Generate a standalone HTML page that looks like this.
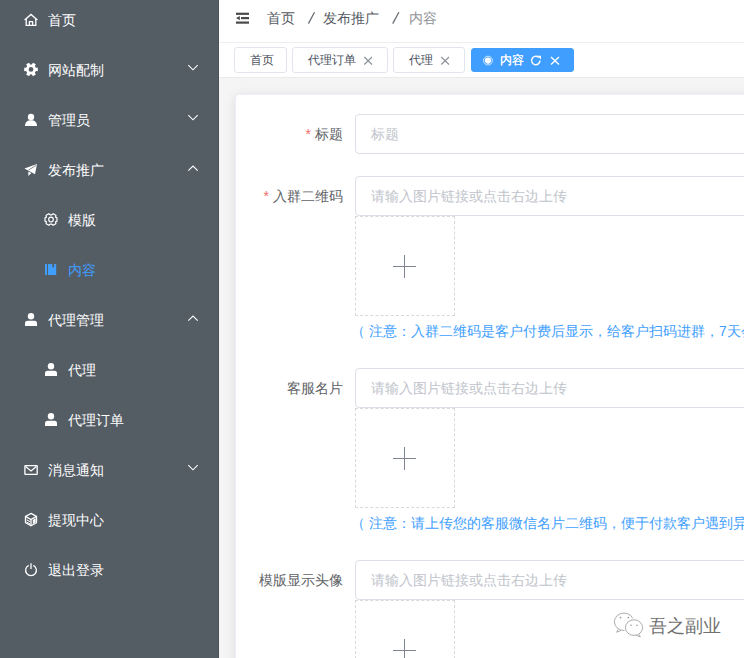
<!DOCTYPE html>
<html><head><meta charset="utf-8">
<style>
*{box-sizing:border-box;margin:0;padding:0}
html,body{width:744px;height:658px;overflow:hidden;background:#f5f5f5;font-family:"Liberation Sans",sans-serif;}
#side{position:absolute;left:0;top:0;width:219px;height:658px;background:#545c64;border-right:1px solid #4b5259}
.mi{position:absolute;left:0;width:218px;height:50px;line-height:50px;color:#fff;font-size:14px;white-space:nowrap}
.mi .t{position:absolute;left:48px;top:0}
.mi.sub .t{left:68px}
.mi.act{color:#409eff}
#sico{position:absolute;left:0;top:0}
#hdr{position:absolute;left:219px;top:0;width:525px;height:43px;background:#fff;border-bottom:1px solid #eceef0}
.bc{position:absolute;top:0;line-height:36px;font-size:14px;white-space:nowrap;color:#555a62}
#tags{position:absolute;left:219px;top:43px;width:525px;height:35px;background:#fff;border-bottom:1px solid #eaeaea}
.tag{position:absolute;top:47px;height:26px;border:1px solid #e2e5ee;border-radius:3px;background:#fff}
.tag.act{background:#409eff;border-color:#409eff}
.tt{position:absolute;top:43px;line-height:34px;font-size:12px;color:#495060;white-space:nowrap}
#card{position:absolute;left:235px;top:94px;width:560px;height:600px;background:#fff;border:1px solid #ebeef5;border-radius:4px;box-shadow:0 2px 12px 0 rgba(0,0,0,.1)}
.lbl{position:absolute;width:200px;text-align:right;font-size:14px;color:#606266;line-height:40px;height:40px}
.lbl i{font-style:normal;color:#f56c6c;margin-right:4px}
.inp{position:absolute;left:355px;width:500px;height:40px;border:1px solid #dcdfe6;border-radius:4px;background:#fff;font-size:14px;color:#c0c4cc;line-height:38px;padding-left:15px;white-space:nowrap}
.up{position:absolute;left:355px;width:100px;height:100px;border:1px dashed #d9d9d9;border-radius:0}
.up:before{content:"";position:absolute;left:37px;top:49px;width:23px;height:1px;background:#7f8690}
.up:after{content:"";position:absolute;left:48px;top:38px;width:1px;height:23px;background:#7f8690}
.note{position:absolute;left:355px;font-size:14px;color:#409eff;line-height:30px;white-space:nowrap}
#wm{position:absolute;left:649px;top:614px;font-size:18px;line-height:24px;color:#6f6f6f;white-space:nowrap;text-shadow:1px 1px 0 #fff,-1px -1px 0 #fff,1px -1px 0 #fff,-1px 1px 0 #fff}
</style></head><body>
<div id="side">
  <div class="mi" style="top:-5px"><span class="t">首页</span></div>
  <div class="mi" style="top:45px"><span class="t">网站配制</span></div>
  <div class="mi" style="top:95px"><span class="t">管理员</span></div>
  <div class="mi" style="top:145px"><span class="t">发布推广</span></div>
  <div class="mi sub" style="top:195px"><span class="t">模版</span></div>
  <div class="mi sub act" style="top:245px"><span class="t">内容</span></div>
  <div class="mi" style="top:295px"><span class="t">代理管理</span></div>
  <div class="mi sub" style="top:345px"><span class="t">代理</span></div>
  <div class="mi sub" style="top:395px"><span class="t">代理订单</span></div>
  <div class="mi" style="top:445px"><span class="t">消息通知</span></div>
  <div class="mi" style="top:495px"><span class="t">提现中心</span></div>
  <div class="mi" style="top:545px"><span class="t">退出登录</span></div>
  <svg id="sico" width="219" height="658" viewBox="0 0 219 658">
    <g fill="none" stroke="#fff" stroke-width="1.3">
      <path d="M24.6,19.9 L31,14.4 L37.4,19.9"/>
      <path d="M26.2,18.6 V25.4 H35.8 V18.6"/>
      <path d="M29.4,25.4 V21.7 H32.6 V25.4"/>
    </g>
    <g fill="#fff">
      <g transform="translate(31,69.4)">
        <circle r="5.0"/>
        <rect x="-6.8" y="-1.7" width="13.6" height="3.4"/>
        <rect x="-6.8" y="-1.7" width="13.6" height="3.4" transform="rotate(60)"/>
        <rect x="-6.8" y="-1.7" width="13.6" height="3.4" transform="rotate(120)"/>
        <circle r="2.35" fill="#545c64"/>
      </g>
      <circle cx="31" cy="117" r="3.2"/>
      <path d="M25,126 H37 C37,122.3 34.6,120.3 31,120.3 C27.4,120.3 25,122.3 25,126 Z"/>
      <path d="M24.4,168.6 L37,164.1 L35,174.2 L29.6,171.2 Z"/>
      <path d="M28.3,171.4 L28.3,176 L31.4,173 Z"/>
      <path d="M28.6,170 L36.2,165.3" stroke="#545c64" stroke-width="0.7" fill="none"/>
    </g>
    <g transform="translate(51,219.5) rotate(90)" fill="none" stroke="#fff" stroke-width="1.2">
      <path d="M-1.6,-6 H1.6 L2.4,-4.6 L4.2,-4.9 L5.8,-2.1 L4.6,-0.7 V0.7 L5.8,2.1 L4.2,4.9 L2.4,4.6 L1.6,6 H-1.6 L-2.4,4.6 L-4.2,4.9 L-5.8,2.1 L-4.6,0.7 V-0.7 L-5.8,-2.1 L-4.2,-4.9 L-2.4,-4.6 Z"/>
      <circle r="2.3"/>
    </g>
    <g fill="#409eff">
      <rect x="45" y="264" width="2" height="11"/>
      <path d="M48,264 H52.3 V267.6 L53.2,266.8 L54.1,267.6 V264 H56.2 V275 H48 Z"/>
    </g>
    <g fill="#fff">
      <circle cx="31" cy="316.2" r="3.2"/>
      <path d="M25,326 V323.2 Q25,320.7 27.5,320.7 H34.5 Q37,320.7 37,323.2 V326 Z"/>
      <circle cx="51" cy="366.2" r="3.2"/>
      <path d="M45,376 V373.2 Q45,370.7 47.5,370.7 H54.5 Q57,370.7 57,373.2 V376 Z"/>
      <circle cx="51" cy="416.2" r="3.2"/>
      <path d="M45,426 V423.2 Q45,420.7 47.5,420.7 H54.5 Q57,420.7 57,423.2 V426 Z"/>
    </g>
    <g fill="none" stroke="#fff" stroke-width="1.3">
      <rect x="24.9" y="465.6" width="12.3" height="8.8" rx="0.5"/>
      <path d="M25.6,466.4 L31,471 L36.4,466.4"/>
      <path d="M31,513.4 L36.5,516.4 V522.7 L31,525.7 L25.5,522.7 V516.4 Z"/>
      <path d="M25.5,516.4 L31,519.5 L36.5,516.4 M31,519.5 V525.7"/>
      <path d="M26.6,519.8 L30,521.6 M26.6,522 L30,523.8" stroke-width="1"/>
      <path d="M28.7,565.4 A5.4,5.4 0 1 0 33.3,565.4"/>
      <path d="M31,563.2 V569"/>
      <path d="M188.3,65.2 L193,69.8 L197.7,65.2" stroke-width="1.1"/>
      <path d="M188.3,115.2 L193,119.8 L197.7,115.2" stroke-width="1.1"/>
      <path d="M188.3,170.6 L193,166 L197.7,170.6" stroke-width="1.1"/>
      <path d="M188.3,320.6 L193,316 L197.7,320.6" stroke-width="1.1"/>
      <path d="M188.3,465.2 L193,469.8 L197.7,465.2" stroke-width="1.1"/>
    </g>
    <path d="M32.8,519.9 L35.6,518.3 V522.3 L32.8,523.9 Z" fill="#fff"/>
  </svg>
</div>
<div id="hdr"></div>
<svg style="position:absolute;left:219px;top:0" width="30" height="40">
  <g fill="#4a4a4a">
    <rect x="17" y="12.7" width="14" height="2.2"/>
    <rect x="22" y="17" width="9" height="2.2"/>
    <path d="M17,18.1 L20.8,16 V20.2 Z"/>
    <rect x="17" y="21.5" width="14" height="2.2"/>
  </g>
</svg>
<svg style="position:absolute;left:300px;top:0" width="110" height="40"><g stroke="#6e7279" stroke-width="1.35"><path d="M8.4,23.6 L14.5,12.2"/><path d="M92.7,23.6 L98.9,12.2"/></g></svg>
<div class="bc" style="left:267px">首页</div>

<div class="bc" style="left:323px">发布推广</div>

<div class="bc" style="left:409px;color:#909399">内容</div>
<div id="tags"></div>
<div class="tag" style="left:234px;width:53px"></div>
<div class="tag" style="left:292px;width:96px"></div>
<div class="tag" style="left:393px;width:72px"></div>
<div class="tag act" style="left:471px;width:103px;top:48px;height:24px"></div>
<div class="tt" style="left:250px">首页</div>
<div class="tt" style="left:308px">代理订单</div>
<div class="tt" style="left:409px">代理</div>
<div class="tt" style="left:500px;color:#fff;text-shadow:0.35px 0 0 #fff">内容</div>
<svg style="position:absolute;left:0;top:0" width="744" height="90">
  <g fill="none" stroke="#8a8f99" stroke-width="1.1">
    <path d="M364.3,57 L372,64.5 M372,57 L364.3,64.5"/>
    <path d="M441.3,57 L449,64.5 M449,57 L441.3,64.5"/>
  </g>
  <g fill="none" stroke="#fff">
    <path d="M551,57 L559,64.5 M559,57 L551,64.5" stroke-width="1.4"/>
    <circle cx="488" cy="60.6" r="4.4" stroke-width="1" stroke-opacity="0.75"/>
    <path d="M540,60.6 A4.2,4.2 0 1 1 538.6,57.4" stroke-width="1.4"/>
  </g>
  <circle cx="488" cy="60.6" r="3.1" fill="#fff"/>
  <path d="M537.2,55.8 L541,55.8 L541,59.6 Z" fill="#fff"/>
</svg>
<div id="card"></div>
<div class="lbl" style="left:143px;top:114px"><i>*</i>标题</div>
<div class="inp" style="top:114px">标题</div>
<div class="lbl" style="left:143px;top:176px"><i>*</i>入群二维码</div>
<div class="inp" style="top:176px">请输入图片链接或点击右边上传</div>
<div class="up" style="top:216px"></div>
<div class="note" style="top:316px"><span style="position:relative;left:-4px">（</span>注意：入群二维码是客户付费后显示，给客户扫码进群，7天会失效）</div>
<div class="lbl" style="left:143px;top:368px">客服名片</div>
<div class="inp" style="top:368px">请输入图片链接或点击右边上传</div>
<div class="up" style="top:408px"></div>
<div class="note" style="top:508px"><span style="position:relative;left:-4px">（</span>注意：请上传您的客服微信名片二维码，便于付款客户遇到异常问题联系）</div>
<div class="lbl" style="left:143px;top:560px">模版显示头像</div>
<div class="inp" style="top:560px">请输入图片链接或点击右边上传</div>
<div class="up" style="top:600px"></div>
<svg style="position:absolute;left:600px;top:600px" width="50" height="45">
  <g stroke="#a3a3a3" stroke-width="0.9">
    <ellipse cx="24" cy="21.8" rx="9.6" ry="8.7" fill="none"/>
    <path d="M18.2,29.4 L16.6,32.2 L21.2,30.4" fill="#fff"/>
    <ellipse cx="34" cy="27.6" rx="8.6" ry="7.8" fill="#fff" stroke="#fff" stroke-width="3"/>
    <ellipse cx="34" cy="27.6" rx="8.6" ry="7.8" fill="#fff"/>
    <path d="M38.8,34.4 L40.4,36.8 L36.2,35.3" fill="#fff"/>
  </g>
  <g fill="#9a9a9a"><circle cx="20.5" cy="17.6" r="0.9"/><circle cx="28.3" cy="17.6" r="0.9"/><circle cx="31" cy="25.2" r="0.8"/><circle cx="37" cy="25.2" r="0.8"/></g>
</svg>
<div id="wm">吾之副业</div>
</body></html>
